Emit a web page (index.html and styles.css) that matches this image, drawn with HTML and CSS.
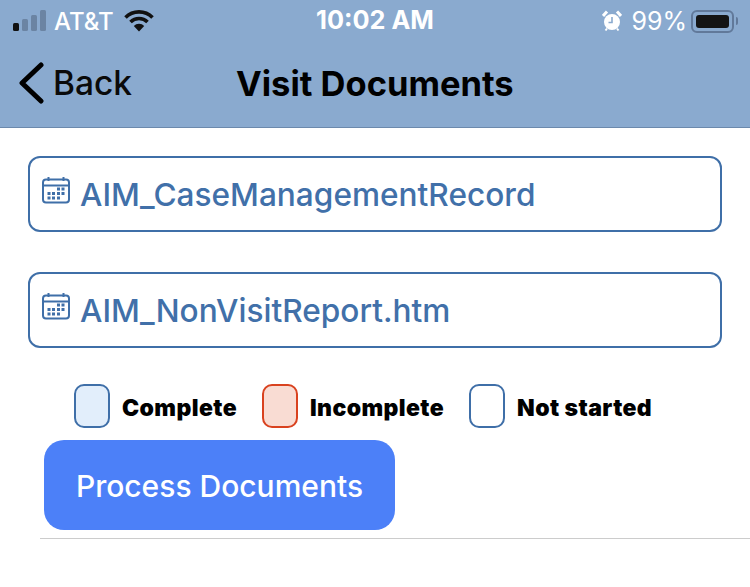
FILE: index.html
```html
<!DOCTYPE html>
<html lang="en">
<head>
    <meta charset="UTF-8">
    <meta name="viewport" content="width=device-width, initial-scale=1.0">
    <title>Visit Documents</title>
    <link rel="stylesheet" href="styles.css">
</head>
<body>
    <header class="top">
        <div class="status">
            <div class="status-left">
                <svg class="signal" width="33" height="22" viewBox="0 0 33 22">
                    <rect x="0" y="13" width="6" height="8" rx="1.5" fill="#111"/>
                    <rect x="9" y="9" width="6" height="12" rx="1.5" fill="#6b84a3"/>
                    <rect x="18" y="5" width="6" height="16" rx="1.5" fill="#6b84a3"/>
                    <rect x="27" y="0" width="6" height="21" rx="1.5" fill="#6b84a3"/>
                </svg>
                <span class="carrier">AT&amp;T</span>
                <svg class="wifi" width="30" height="22" viewBox="0 0 30 22">
                    <path d="M1.5 7.5 A19 19 0 0 1 28.5 7.5" fill="none" stroke="#111" stroke-width="3.6"/>
                    <path d="M6.5 12 A12 12 0 0 1 23.5 12" fill="none" stroke="#111" stroke-width="3.6"/>
                    <path d="M9.8 16 L15 21.5 L20.2 16 A7 7 0 0 0 9.8 16 Z" fill="#111"/>
                </svg>
            </div>
            <div class="clock">10:02 AM</div>
            <div class="status-right">
                <svg class="alarm" width="20" height="22" viewBox="0 0 20 22">
                    <circle cx="10" cy="12" r="8" fill="#fff"/>
                    <path d="M1 6 L5 1.5 M19 6 L15 1.5" stroke="#fff" stroke-width="3"/>
                    <path d="M3.5 20.5 L5 18.5 M16.5 20.5 L15 18.5" stroke="#fff" stroke-width="2"/>
                    <path d="M10 7 V12.5 H6.5" fill="none" stroke="#8aaacf" stroke-width="1.6"/>
                </svg>
                <span class="battery-text">99%</span>
                <div class="battery"><div class="battery-fill"></div></div>
                <div class="battery-tip"></div>
            </div>
        </div>
        <div class="nav">
            <div class="back">
                <svg width="26" height="42" viewBox="0 0 26 42">
                    <path d="M23 3 L4 21 L23 39" fill="none" stroke="#000" stroke-width="5" stroke-linecap="round" stroke-linejoin="round"/>
                </svg>
                <span>Back</span>
            </div>
            <h1>Visit Documents</h1>
        </div>
    </header>

    <main class="content">
        <div class="doc">
            <svg class="cal" width="28" height="28" viewBox="0 0 28 28">
                <use href="#calendar"/>
            </svg>
            <span>AIM_CaseManagementRecord</span>
        </div>
        <div class="doc">
            <svg class="cal" width="28" height="28" viewBox="0 0 28 28">
                <use href="#calendar"/>
            </svg>
            <span>AIM_NonVisitReport.htm</span>
        </div>

        <div class="legend">
            <div class="legend-item">
                <div class="swatch swatch-complete"></div>
                <span>Complete</span>
            </div>
            <div class="legend-item">
                <div class="swatch swatch-incomplete"></div>
                <span>Incomplete</span>
            </div>
            <div class="legend-item">
                <div class="swatch"></div>
                <span>Not started</span>
            </div>
        </div>

        <button class="process" type="button">Process Documents</button>
        <div class="rule"></div>
    </main>

    <svg class="defs" width="0" height="0">
        <symbol id="calendar" viewBox="0 0 28 28">
            <rect x="1" y="3.5" width="26" height="23" rx="3" fill="none" stroke="#3f6fa8" stroke-width="2"/>
            <path d="M1 9.5 H27" stroke="#3f6fa8" stroke-width="2"/>
            <path d="M6.5 1 V5 M21.5 1 V5" stroke="#3f6fa8" stroke-width="2"/>
            <g fill="#3f6fa8">
                <rect x="15" y="11.5" width="3" height="3"/>
                <rect x="19.5" y="11.5" width="3" height="3"/>
                <rect x="5.5" y="16" width="3" height="3"/>
                <rect x="10" y="16" width="3" height="3"/>
                <rect x="15" y="16" width="3" height="3"/>
                <rect x="19.5" y="16" width="3" height="3"/>
                <rect x="5.5" y="20.5" width="3" height="3"/>
                <rect x="10" y="20.5" width="3" height="3"/>
                <rect x="15" y="20.5" width="3" height="3"/>
            </g>
        </symbol>
    </svg>
</body>
</html>
```

FILE: styles.css
```css
* {
    box-sizing: border-box;
}

html, body {
    margin: 0;
    padding: 0;
}

body {
    width: 750px;
    height: 587px;
    overflow: hidden;
    background-color: #ffffff;
    font-family: Inter, "Liberation Sans", sans-serif;
}

.top {
    height: 128px;
    background-color: #8aaacf;
    border-bottom: 1px solid #6c89ac;
}

.status {
    height: 42px;
    padding: 0 0 0 13px;
    display: flex;
    align-items: center;
    position: relative;
    color: #ffffff;
    font-size: 24px;
}

.status-left {
    display: flex;
    align-items: center;
}

.carrier {
    margin-left: 8px;
    font-weight: 500;
}

.wifi {
    margin-left: 10px;
}

.clock {
    position: absolute;
    left: 316px;
    top: 6px;
    font-size: 25.3px;
    font-weight: 700;
    line-height: 28px;
}

.status-right {
    display: flex;
    align-items: center;
    margin-left: auto;
    padding-right: 12px;
}

.battery-text {
    margin-left: 9px;
    font-size: 25px;
}

.battery {
    width: 43px;
    height: 23px;
    margin-left: 4px;
    padding: 3px;
    border: 2px solid #61799a;
    border-radius: 6px;
}

.battery-fill {
    height: 100%;
    background-color: #141414;
    border-radius: 3px;
}

.battery-tip {
    width: 2px;
    height: 8px;
    margin-left: 2px;
    background-color: #61799a;
    border-radius: 0 2px 2px 0;
}

.nav {
    height: 85px;
    padding: 0 0 4px 18px;
    display: flex;
    align-items: center;
    position: relative;
}

.back {
    display: flex;
    align-items: center;
    color: #0a0a0a;
    font-size: 33.5px;
    font-weight: 500;
}

.back span {
    margin-left: 9px;
}

.nav h1 {
    position: absolute;
    left: 236px;
    top: 22px;
    margin: 0;
    font-size: 34.5px;
    font-weight: 700;
    line-height: 40px;
    color: #000000;
}

.content {
    padding: 28px 28px 0;
}

.doc {
    height: 76px;
    margin-bottom: 40px;
    padding: 0 0 0 12px;
    display: flex;
    align-items: center;
    border: 2px solid #3f6fa8;
    border-radius: 12px;
    color: #4170a9;
    font-size: 31.6px;
    font-weight: 550;
}

.doc span {
    padding-top: 1px;
}

.cal {
    margin: -8px 10px 0 0;
}

.legend {
    display: flex;
    margin-top: -4px;
    padding-left: 46px;
}

.legend-item {
    display: flex;
    align-items: center;
    margin-right: 25px;
    font-size: 23px;
    font-weight: 900;
    letter-spacing: 0.4px;
    color: #000000;
}

.legend-item span {
    margin-left: 12px;
    padding-top: 4px;
}

.swatch {
    width: 36px;
    height: 44px;
    border: 2px solid #3f6fa8;
    border-radius: 10px;
}

.swatch-complete {
    background-color: #e2eefb;
}

.swatch-incomplete {
    background-color: #f9dcd3;
    border-color: #d9421f;
}

.process {
    display: block;
    width: 351px;
    height: 90px;
    margin: 12px 0 0 16px;
    padding: 2px 0 0;
    border: none;
    border-radius: 20px;
    background-color: #4c80f8;
    color: #ffffff;
    font-family: inherit;
    font-size: 30px;
    font-weight: 500;
}

.rule {
    width: 710px;
    height: 1px;
    margin: 8px 0 0 12px;
    background-color: #cccccc;
}

.defs {
    position: absolute;
}
```
